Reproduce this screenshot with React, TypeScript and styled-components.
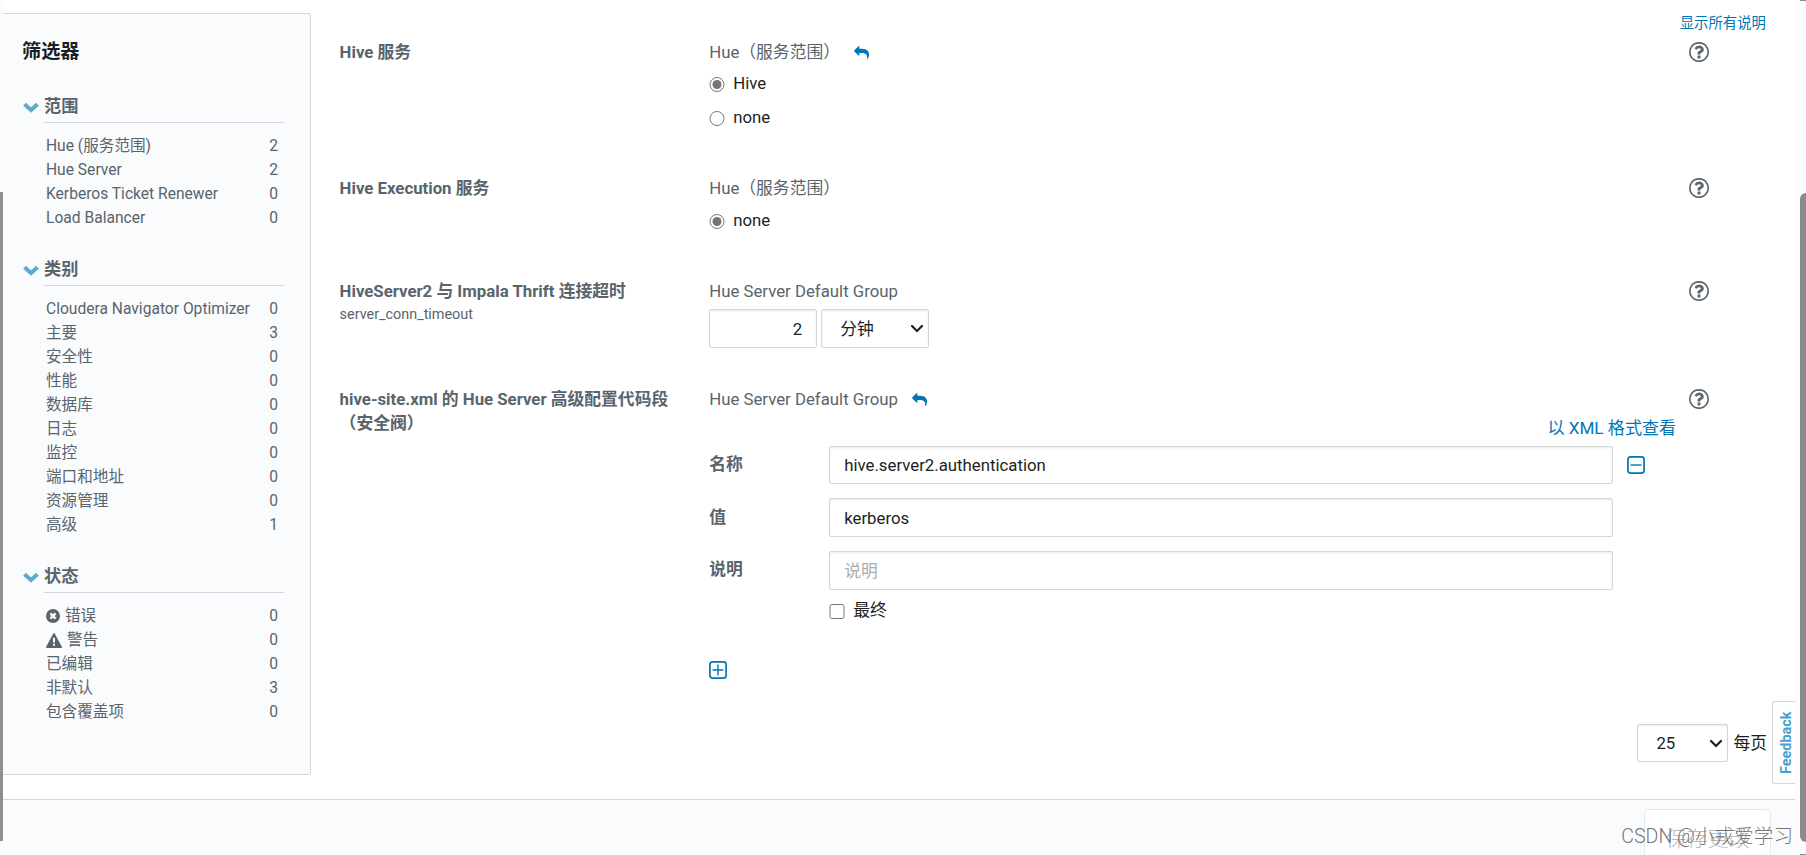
import React from 'react';
import styled, { createGlobalStyle } from 'styled-components';

const Global = createGlobalStyle`
  * { box-sizing: border-box; }
  body {
    margin: 0;
    background: #fff;
    color: #1b1f23;
    font-family: Roboto, "Noto Sans CJK SC", sans-serif;
    font-size: 16.8px;
    line-height: 24px;
    overflow: hidden;
  }
`;

const Page = styled.div`
  display: flex;
  width: 1806px;
  height: 855px;
  overflow: hidden;
`;

const LeftTrack = styled.div`
  width: 3px;
  flex: none;
  background: #fcfcfc;
  padding-top: 192px;
`;
const LeftThumb = styled.div`
  height: 649px;
  background: #8f8f8f;
`;
const RightTrack = styled.div`
  width: 11px;
  flex: none;
  display: flex;
  flex-direction: column;
  justify-content: space-between;
  background: #fcfcfc;
  padding-left: 5px;
`;
const TrackEdge = styled.div`
  height: 1px;
  background: #8b8b8b;
`;
const RightThumb = styled.div`
  height: 649px;
  margin: 192px 0 12px;
  background: #8b8b8b;
  border-radius: 6px 0 0 6px;
`;

const Center = styled.div`
  flex: 1;
  min-width: 0;
  display: flex;
  flex-direction: column;
`;
const Body = styled.div`
  height: 799px;
  display: flex;
  position: relative;
`;

const Sidebar = styled.aside`
  width: 308px;
  height: 762px;
  margin-top: 13px;
  padding: 26px 26px 0 20px;
  background: #fafbfd;
  border: 1px solid #d4d6db;
  border-left: 0;
  border-radius: 0 3px 3px 0;
`;
const SidebarTitle = styled.h2`
  margin: 0 0 31px -1px;
  font-size: 19.2px;
  line-height: 24px;
  font-weight: 700;
`;
const Group = styled.section`
  margin-bottom: 28px;
`;
const GroupHead = styled.div`
  display: flex;
  height: 28px;
  color: #59646c;
  font-weight: 700;
`;
const ChevronBox = styled.span`
  width: 21px;
  flex: none;
  padding-top: 7px;
  line-height: 0;
`;
const GroupName = styled.span`
  flex: 1;
  font-size: 17.2px;
  line-height: 22px;
  border-bottom: 1px solid #d4d6db;
`;
const Facets = styled.ul`
  list-style: none;
  margin: 0;
  padding: 11px 6px 0 23px;
`;
const Facet = styled.li`
  display: flex;
  justify-content: space-between;
  height: 24px;
  font-size: 15.6px;
  color: #59646c;
`;
const FacetName = styled.span`
  display: flex;
  align-items: center;
  gap: 5px;
  white-space: nowrap;
`;

const Main = styled.main`
  width: 1484px;
  padding: 12px 28px 0 28.6px;
`;
const TopLinks = styled.div`
  display: flex;
  justify-content: flex-end;
  height: 28px;
  margin-right: 1px;
  font-size: 14.4px;
`;
const Link = styled.a`
  color: #0076b5;
`;
const Config = styled.div<{ $h: number }>`
  display: grid;
  grid-template-columns: 369.6px 981px 20px;
  height: ${(p) => p.$h}px;
  color: #59646c;
`;
const Label = styled.div`
  font-weight: 700;
  padding-right: 30px;
`;
const Sub = styled.div`
  font-weight: 400;
  font-size: 14.4px;
`;
const Scope = styled.div`
  display: flex;
  align-items: center;
  height: 24px;
`;
const UndoBox = styled.span<{ $gap: number }>`
  margin-left: ${(p) => p.$gap}px;
  line-height: 0;
`;
const HelpBox = styled.div`
  padding-top: 2.4px;
  margin-left: -1px;
  line-height: 0;
`;
const Choice = styled.label<{ $h: number; $lift?: boolean }>`
  display: flex;
  align-items: center;
  height: ${(p) => p.$h}px;
  color: #1b1f23;
  input {
    width: 15.6px;
    height: 15.6px;
    margin: ${(p) => (p.$lift ? 4 : 3)}px 8.4px 0 0;
    accent-color: #767676;
  }
`;
const TimeRow = styled.div`
  display: flex;
  gap: 4px;
  margin-top: 6px;
`;
const boxed = `
  height: 39px;
  border: 1px solid #d4d6da;
  border-radius: 2px;
  background: #fff;
  box-shadow: inset 0 1px 2px rgba(0, 0, 0, 0.09);
  font: inherit;
  color: #1b1f23;
`;
const TextField = styled.input<{ $w: number; $right?: boolean; $h?: number }>`
  ${boxed}
  height: ${(p) => p.$h ?? 39}px;
  width: ${(p) => p.$w}px;
  padding: 0 14px;
  text-align: ${(p) => (p.$right ? 'right' : 'left')};
  &::placeholder { color: #a9aeb3; opacity: 1; }
`;
const Picker = styled.button<{ $w: number; $h: number }>`
  ${boxed}
  display: flex;
  align-items: center;
  justify-content: space-between;
  width: ${(p) => p.$w}px;
  height: ${(p) => p.$h}px;
  padding: 0 4px 0 18px;
`;
const XmlLink = styled.div`
  text-align: right;
  font-size: 17.1px;
  height: 24px;
  margin: 5px 14px 6px 0;
`;
const Property = styled.div<{ $mb: number }>`
  display: grid;
  grid-template-columns: 120px 784px 1fr;
  margin-bottom: ${(p) => p.$mb}px;
`;
const PropName = styled.span<{ $top?: number }>`
  font-weight: 700;
  padding-top: ${(p) => p.$top ?? 6}px;
`;
const IconButton = styled.button`
  display: block;
  justify-self: start;
  align-self: start;
  padding: 0;
  border: 0;
  background: none;
  line-height: 0;
  margin: 10px 0 0 14px;
`;
const AddButton = styled(IconButton)`
  margin: 39px 0 0;
`;
const FinalRow = styled.div`
  padding-left: 120px;
  margin-top: 7px;
`;
const Pager = styled.div`
  display: flex;
  justify-content: flex-end;
  align-items: center;
  gap: 5px;
  color: #1b1f23;
`;
const Feedback = styled.div`
  position: absolute;
  right: 0;
  top: 701px;
  width: 23px;
  height: 83px;
  display: flex;
  align-items: center;
  padding-right: 5px;
  justify-content: center;
  writing-mode: vertical-rl;
  transform: rotate(180deg);
  border: 1px solid #d4d6da;
  border-left: 0;
  border-radius: 0 3px 3px 0;
  background: #fff;
  color: #4a9fcb;
  font-size: 14.4px;
  font-weight: 700;
  line-height: 16px;
`;

const Footer = styled.footer`
  position: relative;
  height: 56px;
  border-top: 1px solid #d4d6db;
  background: #fafbfd;
  display: flex;
  justify-content: flex-end;
  padding: 9px 24px 0 0;
`;
const SaveButton = styled.button`
  width: 127px;
  height: 60px;
  padding: 0;
  border: 1px solid #e6e8eb;
  border-radius: 4px;
  background: #fff;
  color: #b9bdc1;
  font: inherit;
  font-size: 21px;
  font-weight: 300;
`;
const Watermark = styled.span`
  position: absolute;
  right: 2px;
  top: 24px;
  font-size: 19.6px;
  font-weight: 300;
  line-height: 26px;
  color: rgba(100, 100, 100, 0.9);
  white-space: nowrap;
`;

const Chevron = () => (
  <svg width="16" height="11" viewBox="0 0 16 11" fill="none" stroke="#5fa9cf" strokeWidth="4">
    <path d="M1.5 2.2 L8 8 L14.5 2.2" />
  </svg>
);
const Caret = () => (
  <svg width="14" height="9" viewBox="0 0 14 9" fill="none" stroke="#1b1f23" strokeWidth="2.2" strokeLinecap="round">
    <path d="M2 2 L7 7 L12 2" />
  </svg>
);
const Undo = () => (
  <svg width="15" height="13" viewBox="0 0 1792 1536" fill="#0076b5">
    <path d="M1792 1056q0 166-127 451-3 7-10.500 24t-13.500 30-13 22q-12 17-28 17-15 0-23.500-10t-8.500-25q0-9 2.500-26.500t2.500-23.500q5-68 5-123 0-101-17.500-181t-48.500-138.500-80-101-105.500-69.500-133-42.500-154-21.500-175.500-6h-224v256q0 26-19 45t-45 19-45-19l-512-512q-19-19-19-45t19-45l512-512q19-19 45-19t45 19 19 45v256h224q713 0 875 403 53 134 53 333z" />
  </svg>
);
const Help = () => (
  <svg width="20" height="20" viewBox="0 0 1536 1536" fill="#59646c">
    <path d="M880 1072v160q0 14-9 23t-23 9h-160q-14 0-23-9t-9-23v-160q0-14 9-23t23-9h160q14 0 23 9t9 23zm256-496q0 50-15 90t-45.500 69-52 44-59.500 36q-32 18-46.500 28t-26 24-11.500 29v32q0 14-9 23t-23 9h-160q-14 0-23-9t-9-23v-68q0-35 10.500-64.500t24-47.500 39-35.500 41-25.500 44.500-21q53-25 75-43t22-49q0-42-43.500-71.500t-95.500-29.500q-56 0-95 27-29 20-80 83-9 12-25 12-11 0-19-6l-108-82q-10-7-12-20t5-23q122-192 349-192 129 0 238.500 89.500t109.500 214.500zm-368-448q-130 0-248.500 51t-204 136.500-136.500 204-51 248.500 51 248.500 136.500 204 204 136.500 248.500 51 248.500-51 204-136.500 136.500-204 51-248.500-51-248.500-136.500-204-204-136.500-248.500-51zm768 640q0 209-103 385.500t-279.500 279.500-385.500 103-385.500-103-279.500-279.500-103-385.500 103-385.500 279.500-279.500 385.500-103 385.500 103 279.500 279.500 103 385.500z" />
  </svg>
);
const BoxSign = ({ plus }: { plus?: boolean }) => (
  <svg width="18" height="18" viewBox="0 0 18 18" fill="none" stroke="#0076b5" strokeWidth="1.7">
    <rect x="0.900" y="0.900" width="16.200" height="16.200" rx="2.600" />
    <path strokeWidth="1.400" d={plus ? 'M3.500 9 H14.500 M9 3.500 V14.500' : 'M3.500 9 H14.500'} />
  </svg>
);
const ErrorIcon = () => (
  <svg width="14" height="14" viewBox="0 0 14 14">
    <circle cx="7" cy="7" r="7" fill="#59646c" />
    <path d="M4.400 4.400 L9.600 9.600 M9.600 4.400 L4.400 9.600" stroke="#fafbfd" strokeWidth="2.400" />
  </svg>
);
const WarnIcon = () => (
  <svg width="16" height="15" viewBox="0 0 16 15">
    <path d="M8 0.800 L15.200 14.200 H0.800 Z" fill="#59646c" stroke="#59646c" strokeWidth="1.500" strokeLinejoin="round" />
    <path d="M8 4.800 V9.600 M8 10.700 V12.800" stroke="#fafbfd" strokeWidth="2" />
  </svg>
);

type Item = { name: string; count: number; icon?: React.ReactNode };
const groups: { title: string; items: Item[] }[] = [
  {
    title: '范围',
    items: [
      { name: 'Hue (服务范围)', count: 2 },
      { name: 'Hue Server', count: 2 },
      { name: 'Kerberos Ticket Renewer', count: 0 },
      { name: 'Load Balancer', count: 0 },
    ],
  },
  {
    title: '类别',
    items: [
      { name: 'Cloudera Navigator Optimizer', count: 0 },
      { name: '主要', count: 3 },
      { name: '安全性', count: 0 },
      { name: '性能', count: 0 },
      { name: '数据库', count: 0 },
      { name: '日志', count: 0 },
      { name: '监控', count: 0 },
      { name: '端口和地址', count: 0 },
      { name: '资源管理', count: 0 },
      { name: '高级', count: 1 },
    ],
  },
  {
    title: '状态',
    items: [
      { name: '错误', count: 0, icon: <ErrorIcon /> },
      { name: '警告', count: 0, icon: <WarnIcon /> },
      { name: '已编辑', count: 0 },
      { name: '非默认', count: 3 },
      { name: '包含覆盖项', count: 0 },
    ],
  },
];

export default function App() {
  return (
    <Page lang="zh-CN">
      <Global />
      <LeftTrack><LeftThumb /></LeftTrack>
      <Center>
        <Body>
          <Sidebar>
            <SidebarTitle>筛选器</SidebarTitle>
            {groups.map((g) => (
              <Group key={g.title}>
                <GroupHead>
                  <ChevronBox><Chevron /></ChevronBox>
                  <GroupName>{g.title}</GroupName>
                </GroupHead>
                <Facets>
                  {g.items.map((i) => (
                    <Facet key={i.name}>
                      <FacetName>{i.icon}{i.name}</FacetName>
                      <span>{i.count}</span>
                    </Facet>
                  ))}
                </Facets>
              </Group>
            ))}
          </Sidebar>
          <Main>
            <TopLinks><Link>显示所有说明</Link></TopLinks>
            <Config $h={136}>
              <Label>Hive 服务</Label>
              <div>
                <Scope>Hue（服务范围）<UndoBox $gap={14}><Undo /></UndoBox></Scope>
                <Choice $h={38}><input type="radio" name="hive" defaultChecked />Hive</Choice>
                <Choice $h={30}><input type="radio" name="hive" />none</Choice>
              </div>
              <HelpBox><Help /></HelpBox>
            </Config>
            <Config $h={103}>
              <Label>Hive Execution 服务</Label>
              <div>
                <Scope>Hue（服务范围）</Scope>
                <Choice $h={40}><input type="radio" name="exec" defaultChecked />none</Choice>
              </div>
              <HelpBox><Help /></HelpBox>
            </Config>
            <Config $h={108}>
              <Label>HiveServer2 与 Impala Thrift 连接超时<Sub>server_conn_timeout</Sub></Label>
              <div>
                <Scope>Hue Server Default Group</Scope>
                <TimeRow>
                  <TextField $w={108} $right defaultValue="2" />
                  <Picker $w={108} $h={39}>分钟<Caret /></Picker>
                </TimeRow>
              </div>
              <HelpBox><Help /></HelpBox>
            </Config>
            <Config $h={337}>
              <Label>hive-site.xml 的 Hue Server 高级配置代码段（安全阀）</Label>
              <div>
                <Scope>Hue Server Default Group<UndoBox $gap={14}><Undo /></UndoBox></Scope>
                <XmlLink><Link>以 XML 格式查看</Link></XmlLink>
                <Property $mb={14}>
                  <PropName>名称</PropName>
                  <TextField $w={784} $h={38} defaultValue="hive.server2.authentication" />
                  <IconButton aria-label="删除"><BoxSign /></IconButton>
                </Property>
                <Property $mb={14}>
                  <PropName $top={7}>值</PropName>
                  <TextField $w={784} defaultValue="kerberos" />
                </Property>
                <Property $mb={0}>
                  <PropName>说明</PropName>
                  <TextField $w={784} placeholder="说明" />
                </Property>
                <FinalRow>
                  <Choice $h={25} $lift><input type="checkbox" />最终</Choice>
                </FinalRow>
                <AddButton aria-label="添加"><BoxSign plus /></AddButton>
              </div>
              <HelpBox><Help /></HelpBox>
            </Config>
            <Pager><Picker $w={91} $h={38}>25<Caret /></Picker>每页</Pager>
          </Main>
          <Feedback>Feedback</Feedback>
        </Body>
        <Footer>
          <SaveButton>保存更改</SaveButton>
          <Watermark>CSDN @小戎爱学习</Watermark>
        </Footer>
      </Center>
      <RightTrack><TrackEdge /><RightThumb /><TrackEdge /></RightTrack>
    </Page>
  );
}
